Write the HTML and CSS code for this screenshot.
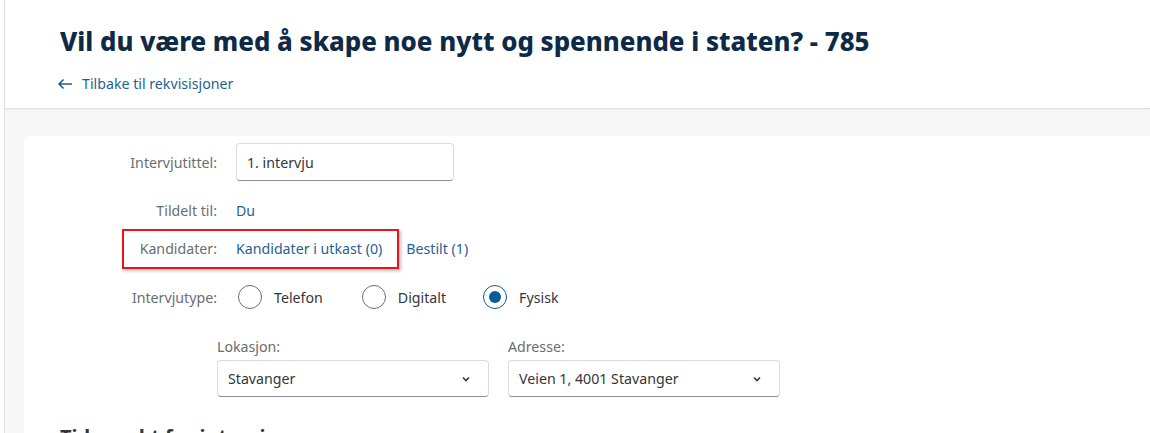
FILE: index.html
```html
<!DOCTYPE html>
<html lang="no">

<head>
    <meta charset="UTF-8">
    <meta name="viewport" content="width=device-width, initial-scale=1.0">
    <title>Intervju - 785</title>
    <link rel="stylesheet" href="styles.css">
</head>

<body>
    <div class="page">
        <header class="header">
            <h1 class="title">Vil du være med å skape noe nytt og spennende i staten? - 785</h1>
            <a class="back-link" href="#">
                <svg class="back-icon" width="16" height="12" viewBox="0 0 16 12">
                    <path d="M15 6H2M6.5 1.5L2 6l4.5 4.5" fill="none" stroke="#1f5f95" stroke-width="1.6" />
                </svg>
                <span>Tilbake til rekvisisjoner</span>
            </a>
        </header>

        <main class="content">
            <div class="card">
                <div class="form">
                    <div class="row row-title">
                        <span class="label">Intervjutittel:</span>
                        <div class="input">1. intervju</div>
                    </div>
                    <div class="row row-assigned">
                        <span class="label">Tildelt til:</span>
                        <a class="link" href="#">Du</a>
                    </div>
                    <div class="row row-candidates">
                        <span class="label">Kandidater:</span>
                        <a class="link" href="#">Kandidater i utkast (0)</a>
                        <a class="link link-ordered" href="#">Bestilt (1)</a>
                        <div class="highlight"></div>
                    </div>
                    <div class="row row-type">
                        <span class="label">Intervjutype:</span>
                        <div class="radios">
                            <label class="radio"><span class="circle"></span>Telefon</label>
                            <label class="radio"><span class="circle"></span>Digitalt</label>
                            <label class="radio selected"><span class="circle"></span>Fysisk</label>
                        </div>
                    </div>
                </div>

                <div class="place">
                    <div class="field field-location">
                        <span class="field-label">Lokasjon:</span>
                        <div class="select">
                            <span>Stavanger</span>
                            <svg width="8" height="6" viewBox="0 0 8 6"><path d="M1 1.5l3 3 3-3" fill="none" stroke="#32363a" stroke-width="1.6" /></svg>
                        </div>
                    </div>
                    <div class="field field-address">
                        <span class="field-label">Adresse:</span>
                        <div class="select">
                            <span>Veien 1, 4001 Stavanger</span>
                            <svg width="8" height="6" viewBox="0 0 8 6"><path d="M1 1.5l3 3 3-3" fill="none" stroke="#32363a" stroke-width="1.6" /></svg>
                        </div>
                    </div>
                </div>

                <h2 class="section-title">Tidspunkt for intervju</h2>
            </div>
        </main>
    </div>
</body>

</html>
```

FILE: styles.css
```css
* {
    margin: 0;
    padding: 0;
    box-sizing: border-box;
    font-family: 'Noto Sans', 'Liberation Sans', sans-serif;
}

body {
    background: #ffffff;
    color: #32363a;
    height: 433px;
    overflow: hidden;
}

.page {
    margin-left: 4px;
    border-left: 1px solid #e2e2e2;
    min-height: 433px;
    background: #f7f7f7;
}

.header {
    background: #ffffff;
    height: 108px;
    padding: 24px 0 0 55px;
    box-shadow: 0 1px 0 #e0e0e0, 0 2px 2px rgba(0, 0, 0, 0.06);
    position: relative;
}

.title {
    font-size: 25.8px;
    font-weight: 800;
    color: #0e2a47;
    line-height: 34px;
}

.back-link {
    display: flex;
    align-items: center;
    gap: 9px;
    margin: 16px 0 0 -3px;
    color: #1f5f95;
    font-size: 14.2px;
    text-decoration: none;
}

.content {
    padding: 28px 0 0 19px;
}

.card {
    background: #ffffff;
    border-top-left-radius: 8px;
    padding-top: 7px;
    min-height: 320px;
}

.form {
    display: flex;
    flex-direction: column;
}

.row {
    display: flex;
    align-items: center;
    min-height: 38px;
    position: relative;
    font-size: 14.2px;
}

.row-assigned {
    margin-top: 10px;
}

.row-type {
    margin-top: 11px;
}

.label {
    width: 193px;
    text-align: right;
    color: #6a6d70;
    margin-right: 19px;
}

.input {
    width: 218px;
    height: 38px;
    border: 1px solid #d9dcdf;
    border-bottom: 1px solid #89919a;
    border-radius: 4px;
    padding: 0 10px;
    display: flex;
    align-items: center;
    color: #32363a;
}

.link {
    color: #1f5f95;
    text-decoration: none;
}

.link-ordered {
    margin-left: 24px;
}

.highlight {
    position: absolute;
    left: 98px;
    top: 0;
    width: 277px;
    height: 40px;
    border: 2px solid #e8161b;
    box-shadow: 2px 2px 3px rgba(0, 0, 0, 0.25);
}

.radios {
    display: flex;
    align-items: center;
}

.radio {
    display: flex;
    align-items: center;
    color: #32363a;
    margin-right: 37px;
}

.radio:nth-child(2) {
    margin-right: 35px;
}

.circle {
    width: 24px;
    height: 24px;
    border: 1px solid #6a6d70;
    border-radius: 50%;
    margin: 0 12px 0 2px;
    position: relative;
}

.selected .circle {
    border-color: #0a5c99;
}

.selected .circle::after {
    content: "";
    position: absolute;
    left: 5px;
    top: 5px;
    width: 12px;
    height: 12px;
    border-radius: 50%;
    background: #0a5c99;
}

.place {
    display: flex;
    gap: 19px;
    margin: 21px 0 0 193px;
}

.field {
    display: flex;
    flex-direction: column;
    gap: 4px;
}

.field-label {
    font-size: 14.2px;
    color: #6a6d70;
}

.select {
    width: 272px;
    height: 37px;
    border: 1px solid #d9dcdf;
    border-bottom: 1px solid #89919a;
    border-radius: 4px;
    padding: 0 18px 0 10px;
    display: flex;
    align-items: center;
    justify-content: space-between;
    font-size: 14.2px;
    color: #32363a;
}

.section-title {
    margin: 26px 0 0 36px;
    font-size: 20px;
    font-weight: 700;
    color: #32363a;
}
```
